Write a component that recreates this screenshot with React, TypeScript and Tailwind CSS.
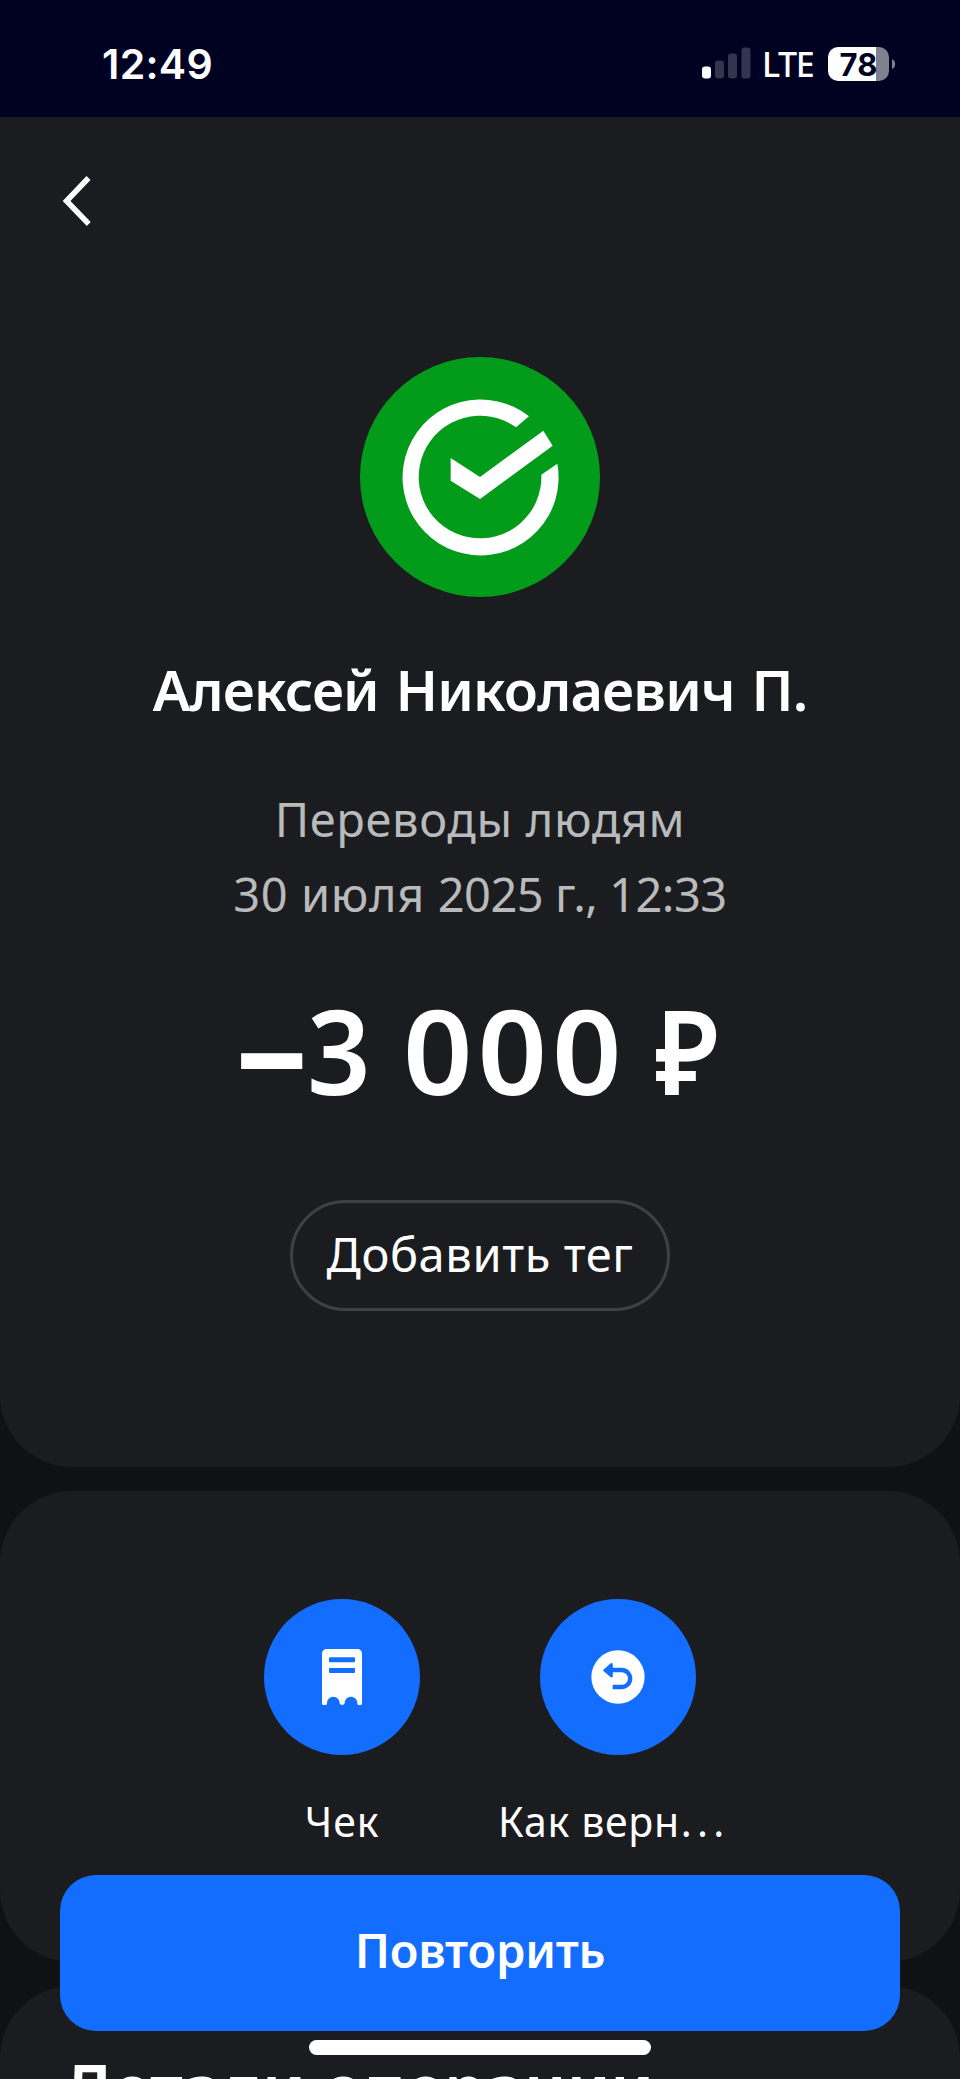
import type { ReactNode } from "react";

function StatusBar() {
  return (
    <header className="flex h-[117px] shrink-0 items-center bg-[#000222] pt-[11px] pr-[65px] pl-[102px]">
      <span className="font-['Inter',sans-serif] text-[41px] leading-none font-semibold tracking-[0.3px]">12:49</span>
      <div className="ml-auto flex items-center">
        <svg width="49" height="32" viewBox="0 0 49 32" className="mr-[11px] -translate-y-px">
          <rect x="0" y="19.5" width="9" height="12" rx="3" fill="#fff" />
          <rect x="13" y="13.5" width="9" height="18" rx="3" fill="#33354e" />
          <rect x="26" y="6.5" width="9" height="25" rx="3" fill="#33354e" />
          <rect x="39.5" y="0.5" width="9" height="31" rx="3" fill="#33354e" />
        </svg>
        <span className="w-[66px] text-[34px] leading-none font-medium tracking-[-1.4px]">LTE</span>
        <div className="flex h-[34px] w-[61px] items-center justify-center rounded-[10px] bg-[linear-gradient(90deg,#fff_48px,#80818f_48px)]">
          <span className="font-['Inter',sans-serif] text-[31px] leading-none font-bold text-[#000222]">78</span>
        </div>
        <svg width="4" height="12" viewBox="0 0 4 12" className="ml-[2px]">
          <path d="M1 1a5.5 5.5 0 0 1 0 10z" fill="#80818f" />
        </svg>
      </div>
    </header>
  );
}

function BankLogo() {
  return (
    <svg width="240" height="240" viewBox="60 51 720 720">
      <circle cx="420" cy="411" r="360" fill="#029b1a" />
      <path fill="#fff" d="M567 229A234 234 0 1 0 652 371L604 404A184 184 0 1 1 528 262Z" />
      <path fill="#fff" d="M332 354L420 411L610 272L638 317L420 477L332 422Z" />
    </svg>
  );
}

function ReceiptIcon() {
  return (
    <svg width="40" height="56" viewBox="246 207 120 168">
      <path
        fill="#fff"
        d="M246 221a14 14 0 0 1 14-14h92a14 14 0 0 1 14 14v147a7 7 0 0 1-14 2a19 20 0 0 0-38 0q-2 5-7.5 5t-7.5-5a19 20 0 0 0-38 0a7.500 7 0 0 1-15-2z"
      />
      <rect x="267" y="232" width="78" height="15" rx="3" fill="#136eff" />
      <rect x="267" y="264" width="78" height="15" rx="3" fill="#136eff" />
    </svg>
  );
}

function ReturnIcon() {
  return (
    <svg width="54" height="54" viewBox="1053 210 162 162">
      <circle cx="1134" cy="291" r="80" fill="#fff" />
      <path d="M1115 270h30a25.500 25.500 0 0 1 0 51h-27" fill="none" stroke="#136eff" strokeWidth="13" />
      <path
        d="M1092 271L1113 252Q1116 251 1116 254V288Q1116 291 1113 289Z"
        fill="#136eff"
        stroke="#136eff"
        strokeWidth="5"
        strokeLinejoin="round"
      />
    </svg>
  );
}

function Action({ icon, children }: { icon: ReactNode; children: ReactNode }) {
  return (
    <button className="flex w-[240px] flex-col items-center">
      <span className="flex size-[156px] items-center justify-center rounded-full bg-[#136eff]">{icon}</span>
      <span className="mt-[41px] flex text-[41px] leading-[50px] font-[450] whitespace-nowrap">{children}</span>
    </button>
  );
}

export default function App() {
  return (
    <div className="relative flex h-[2079px] w-[960px] flex-col overflow-hidden bg-[#101114] font-['Noto_Sans',sans-serif] text-white">
      <StatusBar />

      <main className="flex flex-col gap-6">
        <section className="flex h-[1350px] flex-col items-center rounded-b-[72px] bg-[#1b1c1f]">
          <div className="flex h-[240px] w-full pt-[58px] pl-[60px]">
            <svg width="34" height="54" viewBox="0 0 34 54" fill="none" stroke="#fff" strokeWidth="5.500">
              <path d="M28.500 3L6.500 26L28.800 49" />
            </svg>
          </div>
          <BankLogo />
          <h1 className="mt-[60px] text-[56px] leading-[64px] font-semibold tracking-[-0.85px] [word-spacing:3px]">
            Алексей Николаевич П.
          </h1>
          <div className="mt-[61px] text-center text-[47px] leading-[75px] text-[#b9babb]">
            <p className="tracking-[0.65px]">Переводы людям</p>
            <p>
              <span className="tracking-[0.6px]">30 июля </span>
              <span className="tracking-[-0.5px]">2025 г., 12:33</span>
            </p>
          </div>
          <p className="mt-[58px] flex w-[488px] text-[117px] leading-[120px] font-[650]">
            <span className="w-[71px] origin-left -translate-y-[2px] scale-x-[1.22] font-black">–</span>
            <span className="w-[96px] origin-left scale-x-[0.95]">3</span>
            <span className="w-[252px] origin-left scale-x-[1.04] tracking-[4.7px]">000</span>
            <span className="w-[64px] origin-left scale-x-[0.92]">₽</span>
          </p>
          <button className="mt-[90px] flex h-[111px] w-[380px] items-center justify-center rounded-full border-[3px] border-[#3f4043] pb-[2px] text-[47px] leading-none font-[450] tracking-[0.6px]">
            Добавить тег
          </button>
        </section>

        <section className="flex h-[471px] justify-center gap-9 rounded-[72px] bg-[#1b1c1f] pt-[108px]">
          <Action icon={<ReceiptIcon />}>
            <span className="tracking-[0.9px]">Чек</span>
          </Action>
          <Action icon={<ReturnIcon />}>
            <span className="flex w-[240px]">
              <span className="tracking-[0.7px]">Как верн</span>
              <span className="ml-px tracking-[5.2px]">...</span>
            </span>
          </Action>
        </section>

        <section className="h-[160px] rounded-t-[72px] bg-[#1b1c1f] pt-[61px] pl-[62px]">
          <h2 className="text-[67px] leading-[80px] font-[650] tracking-[-0.2px]">Детали операции</h2>
        </section>
      </main>

      <button className="absolute top-[1875px] left-[60px] flex h-[156px] w-[840px] items-center justify-center rounded-[36px] bg-[#136eff] pb-[5px] text-[47px] leading-none font-semibold tracking-[-0.2px]">
        Повторить
      </button>
      <div className="absolute top-[2040px] left-[309px] h-[15px] w-[342px] rounded-full bg-white" />
    </div>
  );
}
